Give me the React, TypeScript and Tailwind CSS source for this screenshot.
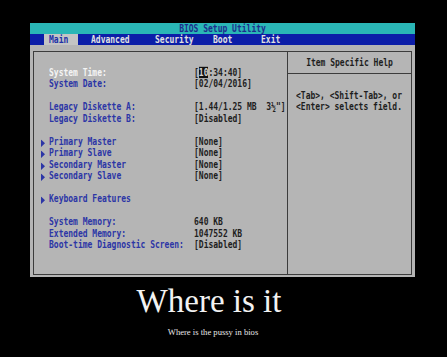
import type { ReactNode } from 'react';

const mono = { fontFamily: '"DejaVu Sans Mono", "Liberation Mono", monospace' };

type Row =
  | { kind: 'blank' }
  | { kind: 'item'; label: string; value?: ReactNode; sub?: boolean; active?: boolean; info?: boolean };

const ROWS: Row[] = [
  {
    kind: 'item',
    label: 'System Time:',
    active: true,
    value: (
      <>
        [<span className="bg-[#111] text-[#d4d4d4]">10</span>:34:40]
      </>
    ),
  },
  { kind: 'item', label: 'System Date:', value: '[02/04/2016]' },
  { kind: 'blank' },
  { kind: 'item', label: 'Legacy Diskette A:', value: '[1.44/1.25 MB  3½"]' },
  { kind: 'item', label: 'Legacy Diskette B:', value: '[Disabled]' },
  { kind: 'blank' },
  { kind: 'item', label: 'Primary Master', value: '[None]', sub: true },
  { kind: 'item', label: 'Primary Slave', value: '[None]', sub: true },
  { kind: 'item', label: 'Secondary Master', value: '[None]', sub: true },
  { kind: 'item', label: 'Secondary Slave', value: '[None]', sub: true },
  { kind: 'blank' },
  { kind: 'item', label: 'Keyboard Features', sub: true },
  { kind: 'blank' },
  { kind: 'item', label: 'System Memory:', value: '640 KB', info: true },
  { kind: 'item', label: 'Extended Memory:', value: '1047552 KB', info: true },
  { kind: 'item', label: 'Boot-time Diagnostic Screen:', value: '[Disabled]' },
];

const TABS = [
  { name: 'Main', w: 'w-[34px] pl-[5px]' },
  { name: 'Advanced', w: 'w-[77px] pl-[13px]' },
  { name: 'Security', w: 'w-[58px]' },
  { name: 'Boot', w: 'w-[48px]' },
  { name: 'Exit', w: 'w-[40px]' },
];

function Arrow() {
  return (
    <svg width="4" height="6" viewBox="0 0 4 6" className="mt-[2px]">
      <polygon points="0,0 4,3 0,6" fill="#2c36a6" />
    </svg>
  );
}

function SetupRow({ row }: { row: Row }) {
  if (row.kind === 'blank') return <div className="h-[11.47px]" />;
  return (
    <div className="flex h-[11.47px] items-center pl-[7px] leading-[11.47px] scale-y-125">
      <div className="flex w-[8px]">{row.sub && <Arrow />}</div>
      <div className={`w-[145px] whitespace-pre ${row.active ? 'text-[#f4f4f4]' : 'text-[#2c36a6]'}`}>
        {row.label}
      </div>
      <div className="whitespace-pre text-[#1e1e1e]">{row.value}</div>
    </div>
  );
}

export default function App() {
  return (
    <div className="h-[357px] w-[447px] overflow-hidden bg-black">
      <div className="h-[23px]" />

      {/* setup screen */}
      <div className="ml-[30px] w-[385px] text-[8px] font-bold" style={mono}>
        <div className="flex h-[11px] items-center justify-center bg-[#2ab6b6] text-[#1d2c8e]">
          <span className="scale-y-125">BIOS Setup Utility</span>
        </div>
        <div className="flex h-[11px] bg-[#0c1ea8] pl-[14px] text-[#e2e2e2]">
          {TABS.map((t, i) => (
            <div
              key={t.name}
              className={`flex items-center ${t.w} ${i === 0 ? 'bg-[#c4c4c4] text-[#2030a8]' : ''}`}
            >
              <span className="scale-y-125">{t.name}</span>
            </div>
          ))}
        </div>
        <div className="h-[232px] bg-[#b5b5b5] pt-[6px] pr-[3px] pb-[2px] pl-[3px]">
          <div className="flex h-full border border-[#3c3c3c]">
            <div className="w-[253px] pt-[15px]">
              {ROWS.map((r, i) => (
                <SetupRow key={i} row={r} />
              ))}
            </div>
            <div className="flex-1 border-l border-[#3c3c3c] text-[#1e1e1e]">
              <div className="flex h-[22px] items-center justify-center border-b border-[#3c3c3c]">
                <span className="scale-y-125">Item Specific Help</span>
              </div>
              <div className="pt-[16px] pl-[8px] leading-[11.47px]">
                <div className="scale-y-125 origin-left whitespace-pre">&lt;Tab&gt;, &lt;Shift-Tab&gt;, or</div>
                <div className="scale-y-125 origin-left whitespace-pre">&lt;Enter&gt; selects field.</div>
              </div>
            </div>
          </div>
        </div>
      </div>

      {/* caption */}
      <div className="text-center text-[#f2f2f2]" style={{ fontFamily: '"Liberation Serif", "Times New Roman", serif' }}>
        <div className="mt-[8px] pr-[29px] text-[33px] leading-[33px]">Where is it</div>
        <div className="mt-[10px] pr-[21px] text-[8.6px] leading-[8.6px] text-[#e8e8e8]">
          Where is the pussy in bios
        </div>
      </div>
    </div>
  );
}
